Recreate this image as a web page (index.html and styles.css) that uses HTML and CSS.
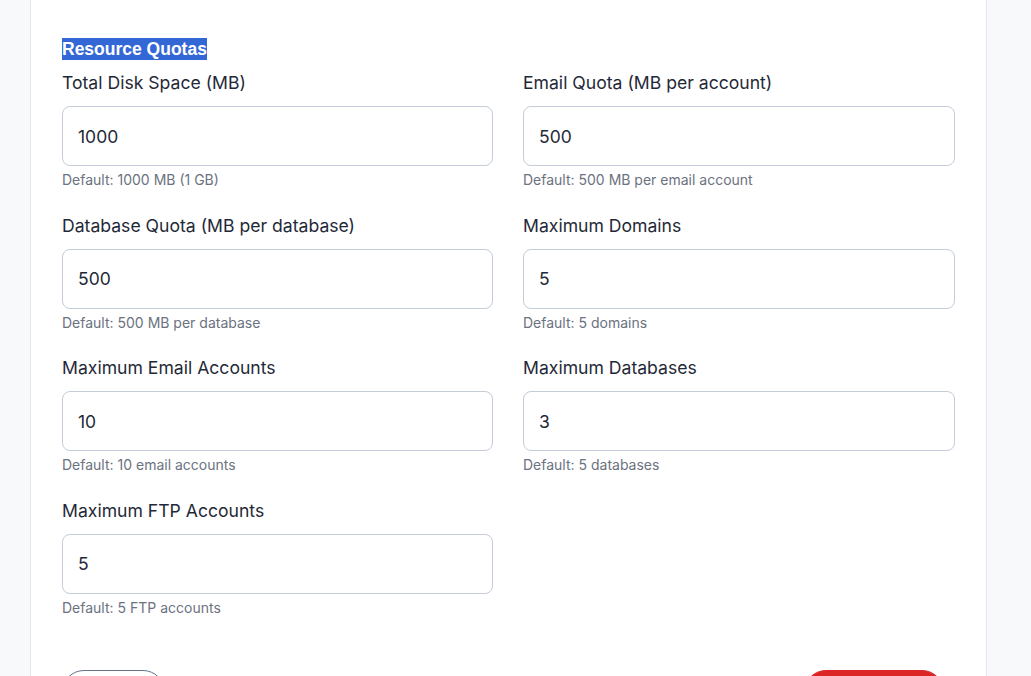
FILE: index.html
```html
<!DOCTYPE html>
<html lang="en">
<head>
<meta charset="utf-8">
<title>Resource Quotas</title>
<link rel="stylesheet" href="styles.css">
</head>
<body>
<div class="card">
  <h2 class="section-title"><span class="selected">Resource Quotas</span></h2>
  <div class="grid">
    <div class="field">
      <label class="label">Total Disk Space (MB)</label>
      <input class="input" type="text" value="1000">
      <div class="help">Default: 1000 MB (1 GB)</div>
    </div>
    <div class="field">
      <label class="label">Email Quota (MB per account)</label>
      <input class="input" type="text" value="500">
      <div class="help">Default: 500 MB per email account</div>
    </div>
    <div class="field">
      <label class="label">Database Quota (MB per database)</label>
      <input class="input" type="text" value="500">
      <div class="help">Default: 500 MB per database</div>
    </div>
    <div class="field">
      <label class="label">Maximum Domains</label>
      <input class="input" type="text" value="5">
      <div class="help">Default: 5 domains</div>
    </div>
    <div class="field">
      <label class="label">Maximum Email Accounts</label>
      <input class="input" type="text" value="10">
      <div class="help">Default: 10 email accounts</div>
    </div>
    <div class="field">
      <label class="label">Maximum Databases</label>
      <input class="input" type="text" value="3">
      <div class="help">Default: 5 databases</div>
    </div>
    <div class="field">
      <label class="label">Maximum FTP Accounts</label>
      <input class="input" type="text" value="5">
      <div class="help">Default: 5 FTP accounts</div>
    </div>
  </div>
  <div class="actions">
    <button class="btn btn-outline">Cancel</button>
    <button class="btn btn-danger">Save Changes</button>
  </div>
</div>
</body>
</html>
```
FILE: styles.css
```css
html, body {
  margin: 0;
  padding: 0;
  height: 100%;
  overflow: hidden;
}
body {
  background: #f8f9fb;
  font-family: Inter, "Noto Sans", sans-serif;
  color: #1f2937;
}
.card {
  margin-left: 30px;
  width: 957px;
  box-sizing: border-box;
  background: #ffffff;
  border: 1px solid #e5e7eb;
  border-top: none;
  padding: 39px 31px 40px;
  min-height: 800px;
}
.section-title {
  margin: 0 0 11px;
  font-family: "Liberation Sans", Arial, sans-serif;
  font-weight: 700;
  font-size: 17.5px;
  line-height: 21px;
  color: #1f2937;
}
.selected {
  background: #3367d6;
  color: #ffffff;
  padding: 1px 0 1px;
}
.grid {
  display: grid;
  grid-template-columns: 431px 432px;
  column-gap: 30px;
  row-gap: 23.5px;
}
.field {
  display: flex;
  flex-direction: column;
}
.label {
  font-size: 17.6px;
  line-height: 24px;
  color: #1f2937;
  margin-bottom: 11px;
}
.input {
  box-sizing: border-box;
  height: 60px;
  width: 100%;
  border: 1px solid #c3ccd8;
  border-radius: 8px;
  padding: 0 15px;
  font-family: Inter, "Noto Sans", sans-serif;
  font-size: 17.5px;
  color: #1f2937;
  background: #fff;
  outline: none;
}
.help {
  margin-top: 4px;
  font-size: 14px;
  line-height: 20px;
  color: #6b7280;
}
.actions {
  margin-top: 52px;
  display: flex;
  justify-content: space-between;
}
.btn {
  height: 44px;
  border-radius: 22px;
  font-family: Inter, "Noto Sans", sans-serif;
  font-size: 15px;
  padding: 0 20px;
}
.btn-outline {
  background: #fff;
  border: 1px solid #64748b;
  color: #334155;
  width: 103px;
}
.btn-danger {
  background: #dc2626;
  border: 1px solid #dc2626;
  color: #fff;
  width: 140px;
  margin-right: 11px;
}
```
